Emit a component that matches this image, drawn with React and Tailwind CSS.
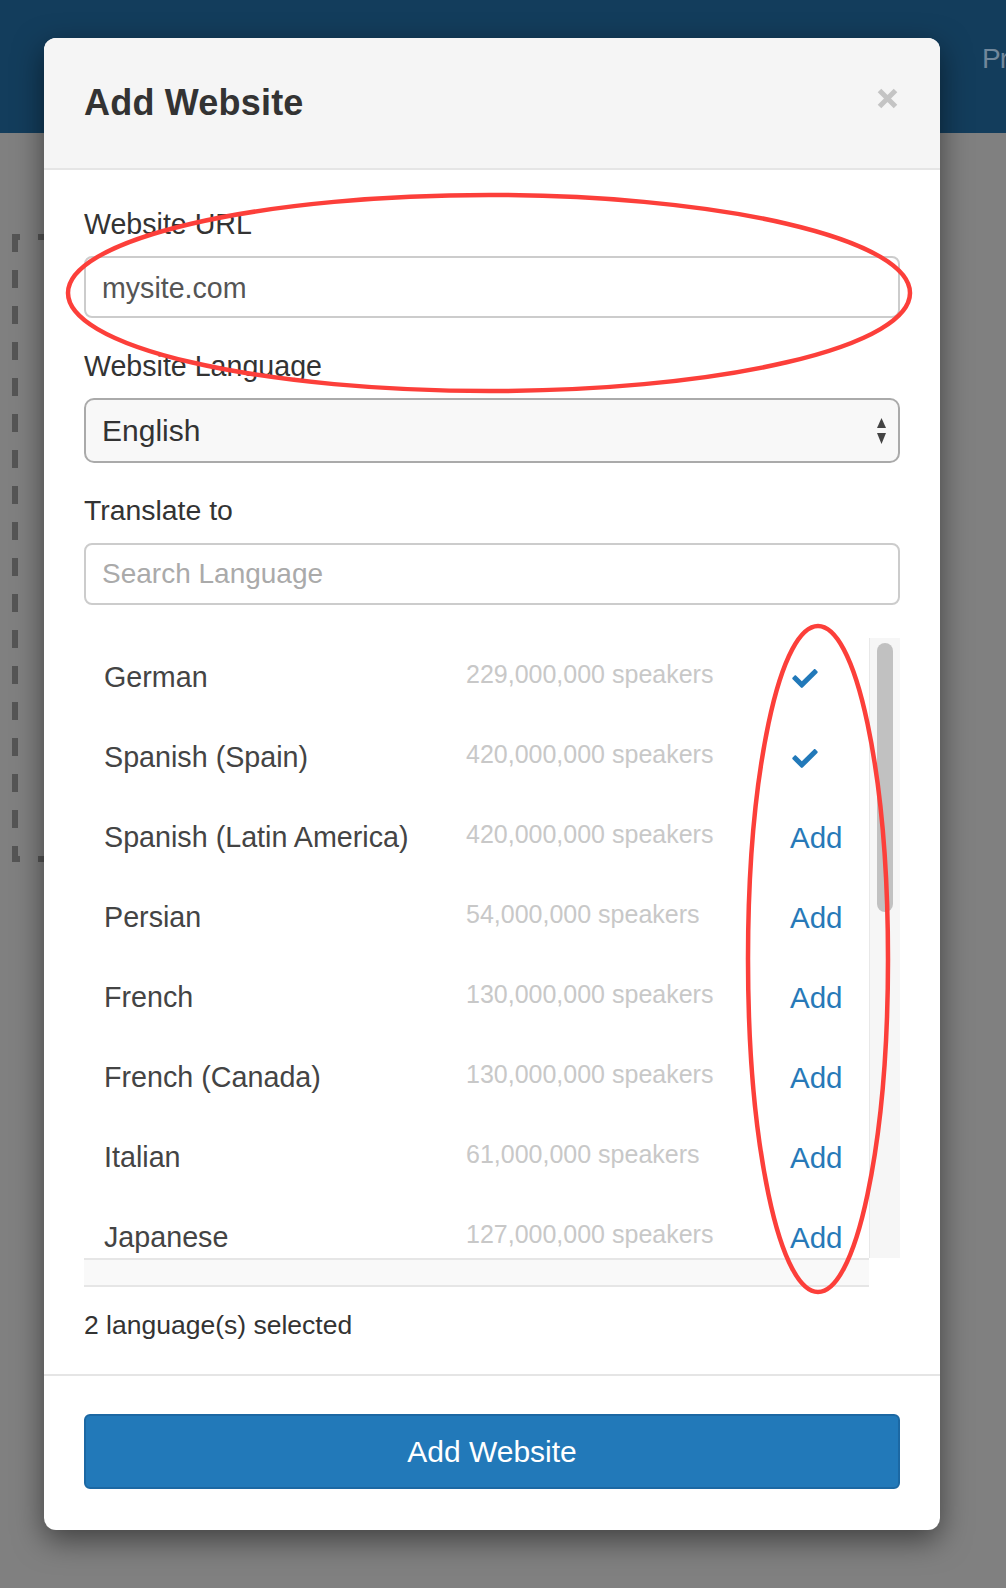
import React from "react";

const languages = [
  { name: "German", speakers: "229,000,000 speakers", added: true },
  { name: "Spanish (Spain)", speakers: "420,000,000 speakers", added: true },
  { name: "Spanish (Latin America)", speakers: "420,000,000 speakers", added: false },
  { name: "Persian", speakers: "54,000,000 speakers", added: false },
  { name: "French", speakers: "130,000,000 speakers", added: false },
  { name: "French (Canada)", speakers: "130,000,000 speakers", added: false },
  { name: "Italian", speakers: "61,000,000 speakers", added: false },
  { name: "Japanese", speakers: "127,000,000 speakers", added: false },
  { name: "Korean", speakers: "77,000,000 speakers", added: false },
];

function Check() {
  return (
    <svg width="26" height="19" viewBox="0 65 512 382" className="block">
      <path
        fill="#2279b9"
        d="M173.898 439.404l-166.4-166.4c-9.997-9.997-9.997-26.206 0-36.204l36.203-36.204c9.997-9.998 26.207-9.998 36.204 0L192 312.69 432.095 72.596c9.997-9.997 26.207-9.997 36.204 0l36.203 36.204c9.997 9.997 9.997 26.206 0 36.204l-294.4 294.401c-9.998 9.997-26.207 9.997-36.204-.001z"
      />
    </svg>
  );
}

export default function App() {
  return (
    <div className="relative w-[1006px] h-[1588px] overflow-hidden bg-[#808080] font-['Liberation_Sans',Arial,sans-serif]">
      {/* page header (behind overlay) */}
      <div className="h-[133px] bg-[#133d5c] pt-[45px] pl-[982px] whitespace-nowrap overflow-hidden">
        <span className="text-[28px] leading-[28px] text-[#71879b] tracking-[-1px]">Pr</span>
      </div>

      {/* dashed element behind overlay */}
      <svg className="absolute left-0 top-0" width="60" height="900" viewBox="0 0 60 900">
        <line x1="15" y1="234" x2="15" y2="862" stroke="#555555" strokeWidth="6" strokeDasharray="18 18" />
        <rect x="12" y="234" width="8" height="6" fill="#555555" />
        <rect x="38" y="234" width="6" height="6" fill="#555555" />
        <rect x="12" y="856" width="8" height="6" fill="#555555" />
        <rect x="38" y="856" width="6" height="6" fill="#555555" />
      </svg>

      {/* modal */}
      <div className="absolute left-[44px] top-[38px] w-[896px] bg-white rounded-[12px] shadow-[0_10px_30px_rgba(0,0,0,0.5)]">
        <div className="h-[132px] bg-[#f5f5f5] border-b-2 border-[#e5e5e5] rounded-t-[12px] flex items-center justify-between pl-[40px] pr-[42px]">
          <div className="text-[36px] leading-[44px] font-bold text-[#333333] tracking-[0.2px]">Add Website</div>
          <svg width="21" height="21" viewBox="0 0 21 21" className="relative -top-[5px]">
            <path d="M2.5 2.5 L18.5 18.5 M18.5 2.5 L2.5 18.5" stroke="#c4c4c4" strokeWidth="5" />
          </svg>
        </div>

        <div className="pt-[34px] pb-[29px] px-[40px]">
          <div className="h-[40px] leading-[40px] text-[28.6px] text-[#333333]">Website URL</div>
          <div className="mt-[12px] h-[62px] border-2 border-[#cccccc] rounded-[8px] pl-[16px] flex items-center text-[28.6px] text-[#555555]">
            <span className="relative top-[1px]">mysite.com</span>
          </div>

          <div className="mt-[28px] h-[40px] leading-[40px] text-[28.6px] text-[#333333]">Website Language</div>
          <div className="mt-[12px] h-[65px] border-2 border-[#aaaaaa] bg-[#f8f8f8] rounded-[10px] pl-[16px] pr-[12px] flex items-center justify-between text-[30px] text-[#333333]">
            <span>English</span>
            <svg width="9" height="26" viewBox="0 0 9 26" className="block">
              <path d="M4.5 0 L9 10 L0 10 Z" fill="#444444" />
              <path d="M0 15 L9 15 L4.5 26 Z" fill="#444444" />
            </svg>
          </div>

          <div className="mt-[27px] h-[40px] leading-[40px] text-[28.4px] text-[#333333]">Translate to</div>
          <div className="mt-[13px] h-[62px] border-2 border-[#cccccc] rounded-[8px] pl-[16px] flex items-center text-[28px] text-[#aaaaaa]">
            Search Language
          </div>

          <div className="mt-[33px] h-[620px] flex">
            <div className="w-[785px] h-[620px] overflow-hidden">
              {languages.map((l) => (
                <div key={l.name} className="h-[80px] flex items-center pl-[20px]">
                  <div className="w-[362px] text-[28.7px] text-[#444444] whitespace-nowrap">{l.name}</div>
                  <div className="w-[324px] text-[25px] text-[#c8c8c8] whitespace-nowrap relative -top-[3px]">{l.speakers}</div>
                  <div className="flex items-center">
                    {l.added ? (
                      <span className="pl-[2px]"><Check /></span>
                    ) : (
                      <span className="text-[29.5px] text-[#2779b8]">Add</span>
                    )}
                  </div>
                </div>
              ))}
            </div>
            <div className="w-[31px] h-[620px] bg-[#f6f6f6] border-l border-[#e8e8e8] pl-[7px] pt-[5px]">
              <div className="w-[16px] h-[269px] rounded-full bg-[#c1c1c1]" />
            </div>
          </div>
          <div className="w-[785px] h-[29px] border-y-2 border-[#e6e6e6] bg-[#f9f9f9]" />

          <div className="mt-[18px] h-[40px] leading-[40px] text-[26.5px] text-[#333333]">2 language(s) selected</div>
        </div>

        <div className="border-t-2 border-[#e5e5e5] pt-[38px] pb-[41px] px-[40px]">
          <div className="h-[75px] bg-[#2279b9] border-2 border-[#1c68a3] rounded-[6px] flex items-center justify-center text-[30px] text-white">
            Add Website
          </div>
        </div>
      </div>

      {/* red annotation ellipses */}
      <svg className="absolute left-0 top-0 pointer-events-none" width="1006" height="1588" viewBox="0 0 1006 1588">
        <ellipse cx="489" cy="293" rx="421" ry="98" fill="none" stroke="#fc3f3a" strokeWidth="4.5" />
        <ellipse cx="818" cy="959" rx="70" ry="333" fill="none" stroke="#fc3f3a" strokeWidth="4.5" />
      </svg>
    </div>
  );
}
